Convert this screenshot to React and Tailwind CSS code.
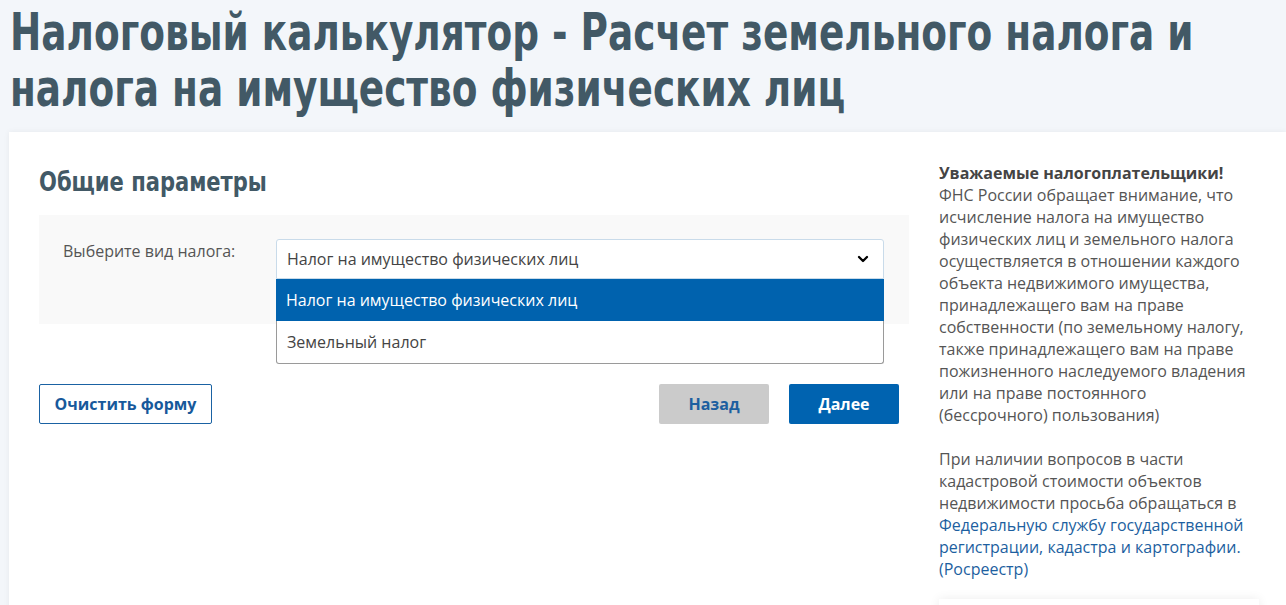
import { ChevronDown } from 'lucide-react';

const body = { fontFamily: '"Open Sans", "Noto Sans", sans-serif' };
const din = { fontFamily: '"DejaVu Sans Condensed", "DejaVu Sans", sans-serif' };

export default function App() {
  return (
    <div className="min-h-[605px] bg-[#f3f6fa] overflow-hidden" style={body}>
      <h1
        className="ml-[10px] pt-[4px] w-[1560px] origin-left scale-x-[0.8] text-[52px] leading-[56px] font-bold text-[#425966]"
        style={din}
      >
        Налоговый калькулятор - Расчет земельного налога и налога на имущество физических лиц
      </h1>

      <div className="ml-[9px] mt-[16px] bg-white shadow-[0_0_6px_rgba(0,0,0,0.06)] pl-[30px] pr-[27px] pt-[30px] pb-10 flex gap-[30px]">
        <div className="w-[870px] flex-shrink-0">
          <h2
            className="origin-left scale-x-[0.866] text-[27px] leading-[40px] font-bold text-[#425966] mb-[13px]"
            style={din}
          >
            Общие параметры
          </h2>

          <div className="bg-[#f9f9f9] pl-[24px] pr-[25px] pt-[24px] pb-[45px] flex">
            <label className="w-[213px] flex-shrink-0 pt-[1px] text-[16px] leading-[22px] text-[#555]">
              Выберите вид налога:
            </label>
            <div className="relative flex-1">
              <div className="h-[40px] border border-[#c9dbea] rounded-t-[3px] bg-white flex items-center justify-between pl-[10px] pr-[12px] text-[16px] text-[#444]">
                <span>Налог на имущество физических лиц</span>
                <ChevronDown size={16} strokeWidth={3.5} className="text-black" />
              </div>
              <div className="absolute left-0 right-0 top-[40px] bg-white border border-t-0 border-[#9a9a9a] rounded-b-[3px] z-10">
                <div className="h-[42px] flex items-center pl-[10px] bg-[#0062ae] text-white text-[16px] -mx-px">
                  Налог на имущество физических лиц
                </div>
                <div className="h-[42px] flex items-center pl-[10px] text-[16px] text-[#444]">Земельный налог</div>
              </div>
            </div>
          </div>

          <div className="mt-[60px] pr-[10px] flex items-center justify-between">
            <button
              type="button"
              className="h-[40px] w-[173px] border border-[#1a62a3] rounded-[2px] bg-white text-[16px] font-bold text-[#17599b]"
            >
              Очистить форму
            </button>
            <div className="flex gap-[20px]">
              <button
                type="button"
                className="h-[40px] w-[110px] rounded-[2px] bg-[#cbcbcb] text-[16px] font-bold text-[#1d5fa0]"
              >
                Назад
              </button>
              <button
                type="button"
                className="h-[40px] w-[110px] rounded-[2px] bg-[#0063b0] text-[16px] font-bold text-white"
              >
                Далее
              </button>
            </div>
          </div>
        </div>

        <aside className="w-[320px] flex-shrink-0 text-[16px] leading-[22px] text-[#555]">
          <p>
            <b className="text-[#444]">Уважаемые налогоплательщики!</b>
            <br />
            ФНС России обращает внимание, что исчисление налога на имущество физических лиц и земельного налога
            осуществляется в отношении каждого объекта недвижимого имущества, принадлежащего вам на праве
            собственности (по земельному налогу, также принадлежащего вам на праве пожизненного наследуемого
            владения или на праве постоянного (бессрочного) пользования)
          </p>
          <p className="mt-[22px]">
            При наличии вопросов в части кадастровой стоимости объектов недвижимости просьба обращаться в{' '}
            <a href="#" className="text-[#1d5fa0]">
              Федеральную службу государственной регистрации, кадастра и картографии. (Росреестр)
            </a>
          </p>
          <div className="mt-[19px] h-[40px] bg-white shadow-[0_0_10px_rgba(0,0,0,0.08)]" />
        </aside>
      </div>
    </div>
  );
}
